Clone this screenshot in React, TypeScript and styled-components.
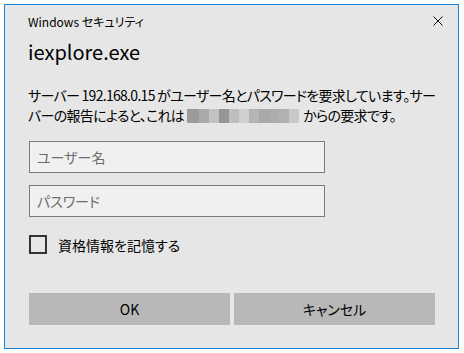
import React from 'react';
import styled, { createGlobalStyle } from 'styled-components';

const GlobalStyle = createGlobalStyle`
  html, body {
    margin: 0;
    padding: 0;
    background: #ffffff;
  }
  body {
    font-family: "Noto Sans CJK JP", "Noto Sans", sans-serif;
    font-feature-settings: "palt";
    color: #000;
  }
`;

const Page = styled.div`
  padding: 4px;
`;

const Dialog = styled.div`
  width: 455px;
  height: 345px;
  box-sizing: border-box;
  border: 1px solid #1883d7;
  background: #e6e6e6;
  display: flex;
  flex-direction: column;
`;

const TitleBar = styled.div`
  height: 30px;
  display: flex;
  align-items: center;
  justify-content: space-between;
  padding: 2px 15px 0 23px;
  box-sizing: border-box;
  font-size: 12px;
`;

const CloseButton = styled.button`
  width: 10px;
  height: 10px;
  padding: 0;
  border: 0;
  background: transparent;
  display: flex;
`;

const Body = styled.div`
  flex: 1;
  display: flex;
  flex-direction: column;
  padding: 0 23px 0 24px;
`;

const Heading = styled.div`
  margin-top: 3px;
  margin-left: -1px;
  font-size: 20px;
  line-height: 28px;
`;

const Message = styled.div`
  margin-top: 19px;
  margin-left: -1px;
  font-size: 14px;
  line-height: 20px;
  letter-spacing: -0.7px;
  white-space: nowrap;
`;

const Mosaic = styled.span`
  display: inline-flex;
  vertical-align: -2px;
  height: 14px;
  margin: 0 4px 0 3px;
`;

const Pixel = styled.span<{ $c: string; $w: number }>`
  width: ${p => p.$w}px;
  height: 100%;
  background: ${p => p.$c};
`;

const Field = styled.input`
  display: block;
  width: 296px;
  height: 32px;
  box-sizing: border-box;
  border: 1px solid #7a7a7a;
  background: #f0f0f0;
  padding: 0 0 1px 7px;
  font: inherit;
  font-size: 14px;
  color: #000;
  outline: none;
  &::placeholder {
    color: #6d6d6d;
  }
`;

const Fields = styled.div`
  margin-top: 16px;
  display: flex;
  flex-direction: column;
  gap: 12px;
`;

const CheckRow = styled.label`
  margin-top: 18px;
  height: 19px;
  display: flex;
  align-items: center;
  gap: 11px;
  font-size: 14px;
`;

const CheckBox = styled.span`
  width: 18px;
  height: 19px;
  box-sizing: border-box;
  border: 2px solid #333333;
`;

const Buttons = styled.div`
  margin-top: 39px;
  display: flex;
  gap: 4px;
`;

const Button = styled.button`
  flex: 1;
  height: 32px;
  border: 0;
  background: #b8b8b8;
  font: inherit;
  font-size: 14px;
  color: #000;
  padding: 0 0 1px;
`;

const mosaic: [string, number][] = [
  ['#9b9b9b', 12],
  ['#a9a9a9', 10],
  ['#c3c3c3', 10],
  ['#969696', 10],
  ['#bebebe', 10],
  ['#d0d0d0', 10],
  ['#b5b5b5', 10],
  ['#a9a9a9', 10],
  ['#adadad', 10],
  ['#b1b1b1', 10],
  ['#c8c8c8', 10],
];

export default function App() {
  return (
    <Page>
      <GlobalStyle />
      <Dialog>
        <TitleBar>
          <span>Windows セキュリティ</span>
          <CloseButton aria-label="閉じる">
            <svg width="10" height="10" viewBox="0 0 10 10">
              <path d="M0.5 0.5 L9.5 9.5 M9.5 0.5 L0.5 9.5" stroke="#111" strokeWidth="1" />
            </svg>
          </CloseButton>
        </TitleBar>
        <Body>
          <Heading>iexplore.exe</Heading>
          <Message>
            サーバー 192.168.0.15 がユーザー名とパスワードを要求しています。サー
            <br />
            バーの報告によると、これは
            <Mosaic>
              {mosaic.map(([c, w], i) => (
                <Pixel key={i} $c={c} $w={w} />
              ))}
            </Mosaic>
            からの要求です。
          </Message>
          <Fields>
            <Field placeholder="ユーザー名" />
            <Field type="password" placeholder="パスワード" />
          </Fields>
          <CheckRow>
            <CheckBox />
            資格情報を記憶する
          </CheckRow>
          <Buttons>
            <Button>OK</Button>
            <Button>キャンセル</Button>
          </Buttons>
        </Body>
      </Dialog>
    </Page>
  );
}
